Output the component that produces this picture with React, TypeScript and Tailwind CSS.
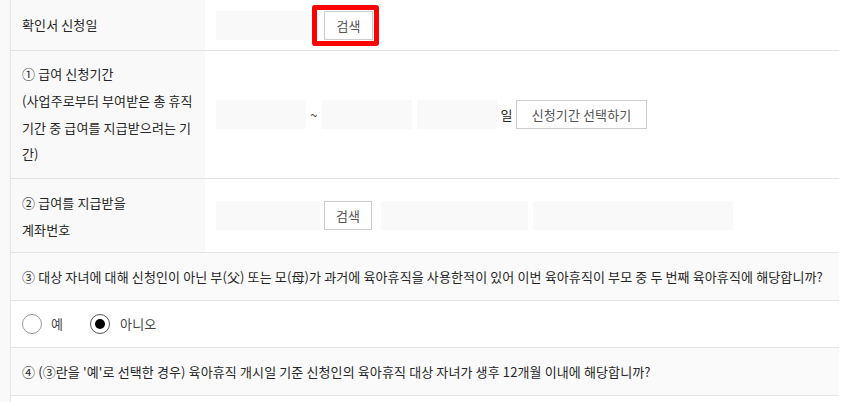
import React from "react";

const font = { fontFamily: '"Noto Sans CJK KR", "Noto Sans", sans-serif' };

function Input({ w }: { w: string }) {
  return <div className={`${w} h-[29px] bg-[#f9f9f9] shrink-0`} />;
}

function Btn({ children, w }: { children: React.ReactNode; w: string }) {
  return (
    <div
      className={`${w} h-[29px] shrink-0 border border-[#cccccc] bg-white text-[#555] text-[13px] flex items-center justify-center`}
    >
      {children}
    </div>
  );
}

export default function App() {
  return (
    <div className="w-[845px] h-[402px] bg-white flex text-[13px] tracking-[0.12px] text-[#262626] overflow-hidden" style={font}>
      <div className="w-[10px] shrink-0 bg-[#f9f9f9]" />
      <div className="w-[829px] shrink-0 border-l border-[#e3e3e3] flex flex-col">
        {/* row 1 */}
        <div className="h-[51px] flex border-b border-[#e3e3e3]">
          <div className="w-[194px] shrink-0 bg-[#f9f9f9] px-[11px] flex items-center">확인서 신청일</div>
          <div className="flex items-center pl-[11px]">
            <Input w="w-[96px]" />
            <div className="relative ml-[12px] mt-[1px]">
              <Btn w="w-[49px]">검색</Btn>
              <div className="absolute left-[-12px] top-[-6px] w-[67px] h-[41px] border-[5px] border-[#ff0000] rounded-[3px]" />
            </div>
          </div>
        </div>
        {/* row 2 */}
        <div className="h-[128px] flex border-b border-[#e3e3e3]">
          <div className="w-[194px] shrink-0 bg-[#f9f9f9] pl-[11px] pr-[8px] flex items-center leading-[26.7px]">
            <div>
              ① 급여 신청기간
              <br />
              (사업주로부터 부여받은 총 휴직 기간 중 급여를 지급받으려는 기간)
            </div>
          </div>
          <div className="flex items-center pl-[11px]">
            <Input w="w-[90px]" />
            <div className="w-[16px] text-center text-[#444]">~</div>
            <Input w="w-[90px]" />
            <div className="ml-[5px]" />
            <Input w="w-[80px]" />
            <div className="w-[19px] text-center">일</div>
            <Btn w="w-[131px]">신청기간 선택하기</Btn>
          </div>
        </div>
        {/* row 3 */}
        <div className="h-[74px] flex border-b border-[#e3e3e3]">
          <div className="w-[194px] shrink-0 bg-[#f9f9f9] px-[11px] flex items-center leading-[27px]">
            <div>
              ② 급여를 지급받을
              <br />
              계좌번호
            </div>
          </div>
          <div className="flex items-center pl-[11px]">
            <Input w="w-[104px]" />
            <div className="ml-[4px]" />
            <Btn w="w-[48px]">검색</Btn>
            <div className="ml-[9px]" />
            <Input w="w-[147px]" />
            <div className="ml-[5px]" />
            <Input w="w-[200px]" />
          </div>
        </div>
        {/* row 4 */}
        <div className="h-[48px] flex items-center bg-[#fafafa] border-b border-[#e3e3e3] px-[11px] whitespace-nowrap">
          ③ 대상 자녀에 대해 신청인이 아닌 부(父) 또는 모(母)가 과거에 육아휴직을 사용한적이 있어 이번 육아휴직이 부모 중 두 번째 육아휴직에 해당합니까?
        </div>
        {/* row 5 */}
        <div className="h-[47px] flex items-center border-b border-[#e3e3e3] px-[11px]">
          <span className="w-[20px] h-[20px] rounded-full border border-[#999] bg-white shrink-0" />
          <span className="ml-[9px] text-[#444]">예</span>
          <span className="ml-[27px] w-[20px] h-[20px] rounded-full border border-[#555] bg-white shrink-0 flex items-center justify-center">
            <span className="w-[10px] h-[10px] rounded-full bg-black" />
          </span>
          <span className="ml-[10px] text-[#444]">아니오</span>
        </div>
        {/* row 6 */}
        <div className="h-[48px] flex items-center bg-[#fafafa] border-b border-[#e3e3e3] px-[11px] whitespace-nowrap">
          ④ (③란을 '예'로 선택한 경우) 육아휴직 개시일 기준 신청인의 육아휴직 대상 자녀가 생후 12개월 이내에 해당합니까?
        </div>
        <div className="flex-1" />
      </div>
    </div>
  );
}
